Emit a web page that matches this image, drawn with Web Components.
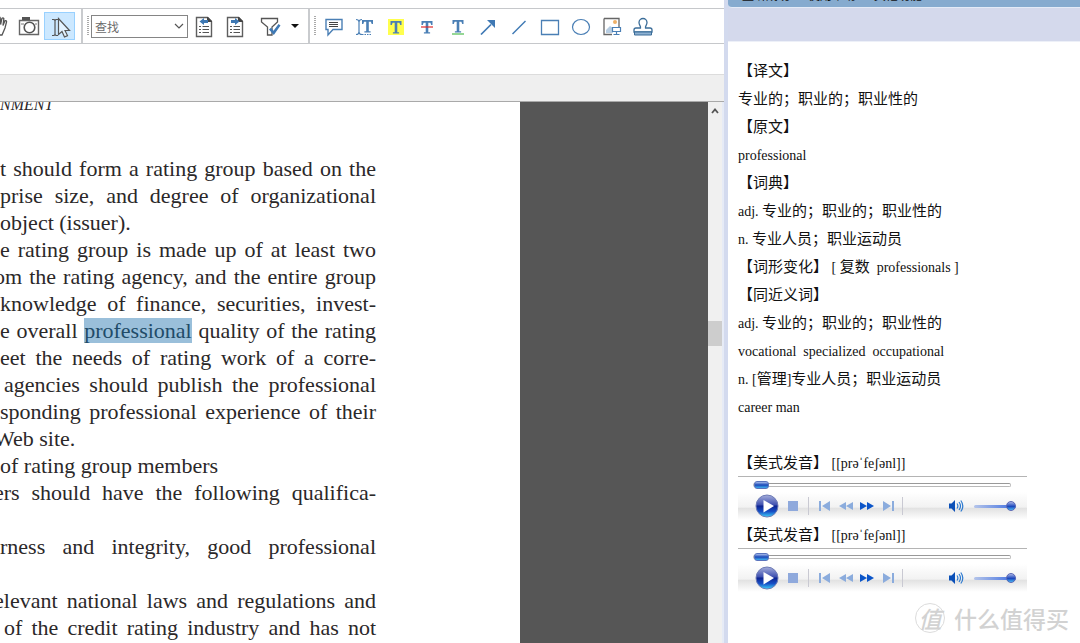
<!DOCTYPE html>
<html lang="zh-CN">
<head>
<meta charset="utf-8">
<title>PDF reader with dictionary</title>
<style>
html,body{margin:0;height:100%}
body{font-family:"Liberation Serif","Noto Sans CJK SC",serif;background:#fff;overflow:hidden}
</style>
</head>
<body>
<app-shell>
  <reader-toolbar slot="tools"></reader-toolbar>
  <pdf-view slot="doc">
    <text-line>t should form a rating group based on the</text-line>
    <text-line>prise size, and degree of organizational</text-line>
    <text-line kind="end">object (issuer).</text-line>
    <text-line>e rating group is made up of at least two</text-line>
    <text-line kind="cut">om the rating agency, and the entire group</text-line>
    <text-line>knowledge of finance, securities, invest-</text-line>
    <text-line>e overall <mark>professional</mark> quality of the rating</text-line>
    <text-line>eet the needs of rating work of a corre-</text-line>
    <text-line kind="gap">agencies should publish the professional</text-line>
    <text-line>sponding professional experience of their</text-line>
    <text-line kind="cut end">Web site.</text-line>
    <text-line kind="end">of rating group members</text-line>
    <text-line kind="cut">ers should have the following qualifica-</text-line>
    <text-line></text-line>
    <text-line>rness and integrity, good professional</text-line>
    <text-line></text-line>
    <text-line kind="cut">elevant national laws and regulations and</text-line>
    <text-line kind="gap">of the credit rating industry and has not</text-line>
  </pdf-view>
  <dict-panel slot="side">
    <gloss-line>【译文】</gloss-line>
    <gloss-line>专业的；职业的；职业性的</gloss-line>
    <gloss-line>【原文】</gloss-line>
    <gloss-line><span>professional</span></gloss-line>
    <gloss-line>【词典】</gloss-line>
    <gloss-line><span>adj. </span>专业的；职业的；职业性的</gloss-line>
    <gloss-line><span>n. </span>专业人员；职业运动员</gloss-line>
    <gloss-line>【词形变化】<span> [ </span>复数<span>  professionals ]</span></gloss-line>
    <gloss-line>【同近义词】</gloss-line>
    <gloss-line><span>adj. </span>专业的；职业的；职业性的</gloss-line>
    <gloss-line><span>vocational  specialized  occupational</span></gloss-line>
    <gloss-line><span>n. [</span>管理<span>]</span>专业人员；职业运动员</gloss-line>
    <gloss-line><span>career man</span></gloss-line>
    <gloss-line></gloss-line>
    <gloss-line>【美式发音】<span> [[prəˈfeʃənl]]</span></gloss-line>
    <audio-player label="美式发音"></audio-player>
    <gloss-line>【英式发音】<span> [[prəˈfeʃənl]]</span></gloss-line>
    <audio-player label="英式发音"></audio-player>
  </dict-panel>
  <water-mark slot="mark"></water-mark>
</app-shell>

<script>
function define(name, html) {
  customElements.define(name, class extends HTMLElement {
    constructor() {
      super();
      this.attachShadow({ mode: "open" }).innerHTML =
        typeof html === "function" ? html(this) : html;
    }
  });
}

define("app-shell", `
<style>
:host{display:grid;grid-template-columns:minmax(0,1fr) 4px 352px;height:100vh;position:relative;overflow:hidden}
.left{display:flex;flex-direction:column;min-height:0;min-width:0}
.rule{background:#d3daee}
.side{min-height:0;min-width:0;display:grid}
.mark{position:absolute;right:11px;bottom:8px}
</style>
<div class="left"><slot name="tools"></slot><slot name="doc"></slot></div>
<div class="rule"></div>
<div class="side"><slot name="side"></slot></div>
<div class="mark"><slot name="mark"></slot></div>`);

/* Toolbar glyphs, all drawn in a 22 x 22 box */
const T = (x, y) => `<path d="M${x} ${y}h11v4h-1.3l-.8-2.2h-2.1v9.4h1.8v1.3h-6.200v-1.300h1.800v-9.400h-2.100l-.8 2.200h-1.300z" fill="#4a7fb5"/>`;
const page = arrow => `<path d="M3.500 1.500h11l4 4v15h-15z" fill="#fff" stroke="#5e5e5e" stroke-width="1.400"/><path d="M14 1h1l4 4v1h-5z" fill="#444"/><path d="M6 10.500h2M6 13.500h2M6 16.500h2M9.500 10.500h6.500M9.500 13.500h6.500M9.500 16.500h6.500" stroke="#555"/><path d="${arrow}" fill="#3f79b4"/>`;
const icons = {
  hand: `<path d="M2 12l3 7h10l3-7 1.500-6c.4-1.500-1.500-1.800-1.900-.5l-1.600 4 .8-6.500c.1-1.500-1.800-1.600-2-.2l-1.200 5.700-.4-6.500c0-1.500-2-1.400-2 0v6.500L9 4c-.3-1.300-2-1-1.800.5L8 14z" fill="#fff" stroke="#555" stroke-width="1.300"/>`,
  camera: `<path d="M1.500 4.500h19v14h-19z" fill="#fff" stroke="#666" stroke-width="1.400"/><path d="M4 1h8v3H4z" fill="#555"/><path d="M3 8h3M17 8h2" stroke="#777"/><circle cx="11.500" cy="11.500" r="5.300" fill="#fff" stroke="#555" stroke-width="1.600"/>`,
  cursor: `<path d="M3 3.500h2l1 1 1-1h2M6 4.500v14M3 19.500h2l1-1 1 1h2" fill="none" stroke="#555" stroke-width="1.200"/><path d="M9.500 2.500v16l3.500-3 2.500 5.500 3-1.400-2.500-5.100h4.500z" fill="#e4f3ff" stroke="#555" stroke-width="1.200"/>`,
  prev: page("M11 2v2h4v3h-4v2L6.500 5.500z"),
  next: page("M11 2v2H7v3h4v2l4.500-3.500z"),
  filter: `<path d="M2.500 2.500h16v3.500l-5.500 5v8h-4.500v-8l-6-5z" fill="#fff" stroke="#555" stroke-width="1.300"/><path d="M10 13.500l2-1.800 2.500 3L19.500 8l2 1.500-6.700 9.500z" fill="#3f79b4"/>`,
  note: `<path d="M3 3.500h16v10h-9l-5 5.500v-5.500H3z" fill="#fff" stroke="#4a7fb5" stroke-width="1.400"/><path d="M6 6.500h9M6 8.500h9M6 10.500h9" stroke="#444"/>`,
  insert: `<path d="M2 3.500c2 0 3 1 3 2.500v10c0 1.500-1 2.500-3 2.500M8 3.500c-2 0-3 1-3 2.500M5 16c0 1.500 1 2.500 3 2.500" fill="none" stroke="#4a7fb5" stroke-width="1.200"/><path d="M8 18.500h9" stroke="#4a7fb5" stroke-dasharray="1.500 1"/>${T(8, 4)}`,
  mark: `<path d="M3 3h16v16H3z" fill="#ffff4d"/>${T(5.5, 5)}`,
  strike: `${T(5.5, 5)}<path d="M5 11h12" stroke="#e02a2a" stroke-width="1.200"/>`,
  under: `${T(5.5, 4)}<path d="M5 18h12" stroke="#5cc25c" stroke-width="1.300"/>`,
  arrow: `<path d="M4 18.500L14 8.500" stroke="#3f79b4" stroke-width="1.700"/><path d="M10 4h8v8z" fill="#3f79b4"/>`,
  line: `<path d="M4.500 18L17.500 5" stroke="#3f79b4" stroke-width="1.400"/>`,
  rect: `<path d="M2.500 4.500h17v14h-17z" fill="none" stroke="#4a7fb5" stroke-width="1.300"/>`,
  oval: `<ellipse cx="11" cy="11" rx="8.500" ry="7.500" fill="none" stroke="#4a7fb5" stroke-width="1.200"/>`,
  image: `<path d="M3 2.500h15V12M11 18.500H3V2.500" fill="none" stroke="#666" stroke-width="1.300"/><circle cx="14" cy="6" r="2" fill="#eeb067"/><path d="M5 17v-3l4-4 3 2v5z" fill="#b7cde2"/><path d="M11.500 11.500h8v4h-8zM15.500 16v2M12.500 18.500h6" fill="#fff" stroke="#4a7fb5" stroke-width="1.200"/>`,
  stamp: `<path d="M8.500 12c.5-2-1.500-3-1.500-5.500a4 4 0 0 1 8 0c0 2.500-2 3.500-1.500 5.500h4.500c1.500 0 2 1 2 2v2H2v-2c0-1 .5-2 2-2z" fill="#fff" stroke="#3b6d99" stroke-width="1.300"/><path d="M2.500 16h17v3h-17z" fill="#8fb2d2" stroke="#3b6d99"/>`
};
define("tool-icon", el => `
<style>
:host{display:flex;flex:1 1 0;height:28px;min-width:0}
button{flex:1;display:flex;align-items:center;justify-content:center;padding:2px 0 0;border:1px solid transparent;background:none}
:host([active]) button{background:#cce8ff;border-color:#99d1ff}
svg{flex:none;display:block}
</style>
<button type="button" aria-label="${el.getAttribute("name")}"><svg width="22" height="22" viewBox="0 0 22 22">${icons[el.getAttribute("name")]}</svg></button>`);

define("reader-toolbar", `
<style>
:host{display:block;flex:none;padding-top:8px}
.bar{display:flex;height:34px;border:solid #c6c8cb;border-width:1px 0}
.sec{display:flex;align-items:center;box-sizing:border-box;border-right:2px solid #c9cbce}
.one{width:83px}
.one .set{display:flex;width:93px;flex:none;margin-left:-18px}
.one{overflow:hidden}
.two{width:227px;padding-left:4px}
.three{flex:1;border:0;padding-left:4px}
.grip{width:2px;height:20px;background:repeating-linear-gradient(#aaa 0 1px,#fff 1px 2px);flex:none}
.find{display:flex;width:97px;height:23px;box-sizing:border-box;border:1px solid #858585;margin:0 0 0 2px;flex:none}
input{flex:1;min-width:0;border:0;outline:0;padding:0 3px;background:none;font:12px "Noto Sans CJK SC",sans-serif;color:#6b6b6b}
input::placeholder{color:#6b6b6b;opacity:1}
.find button{border:0;background:none;padding:0;width:17px;display:flex;align-items:center;justify-content:center}
.two .set{display:flex;width:62px}
.filter{display:flex;width:31px;margin-left:4px}
.more{border:0;background:none;padding:0;width:19px;display:flex;justify-content:center}
.three .set{display:flex;width:339px;margin-left:3px}
</style>
<div class="bar">
  <div class="sec one"><div class="set"><tool-icon name="hand"></tool-icon><tool-icon name="camera"></tool-icon><tool-icon name="cursor" active></tool-icon></div></div>
  <div class="sec two"><span class="grip"></span>
    <div class="find"><input type="text" placeholder="查找" aria-label="查找"><button type="button" aria-label="展开"><svg width="10" height="6" viewBox="0 0 10 6"><path d="M1 1l4 4 4-4" fill="none" stroke="#555" stroke-width="1.200"/></svg></button></div>
    <div class="set"><tool-icon name="prev"></tool-icon><tool-icon name="next"></tool-icon></div>
    <div class="filter"><tool-icon name="filter"></tool-icon></div>
    <button class="more" type="button" aria-label="更多"><svg width="8" height="4" viewBox="0 0 8 4"><path d="M0 0h8L4 4z" fill="#111"/></svg></button>
  </div>
  <div class="sec three"><span class="grip"></span><div class="set">
    ${["note","insert","mark","strike","under","arrow","line","rect","oval","image","stamp"].map(n => `<tool-icon name="${n}"></tool-icon>`).join("")}
  </div></div>
</div>`);

define("text-line", el => {
  const k = el.getAttribute("kind") || "";
  return `
<style>
:host{display:block;height:27px;font-size:22px;line-height:27px;white-space:nowrap;text-align:justify;text-align-last:${k.includes("end") ? "left" : "justify"};margin-left:${k.includes("cut") ? "-6px" : k.includes("gap") ? "4px" : "0"};color:#2b2829}
::slotted(mark){background:#9abfda;color:#214b68}
</style><slot></slot>`;
});

define("pdf-view", `
<style>
:host{display:flex;flex-direction:column;flex:1;min-height:0}
.tabs{height:26px;margin-top:30px;background:#efefef;border:solid #dcdcdc;border-width:1px 0;border-bottom-color:#a9a9a9;box-sizing:content-box;flex:none}
.view{display:flex;flex:1;min-height:0;background:#565656}
.page{flex:0 1 520px;background:#fff;overflow:hidden;box-sizing:border-box}
.head{font:italic 16px/18px "Liberation Serif",serif;color:#2b2829;height:18px;margin-top:-6px}
.col{width:376px;padding-top:41px}
.stage{flex:1}
.bar{width:14px;background:#f0f0f0;display:flex;flex-direction:column;align-items:center;border-right:2px solid #e6ebf6}
.bar button{border:0;background:none;padding:0;height:18px;width:14px;display:flex;align-items:center;justify-content:center}
.thumb{width:14px;height:25px;background:#cdcdcd;margin-top:201px}
</style>
<div class="tabs"></div>
<div class="view">
  <div class="page"><div class="head">NMENT</div><div class="col"><slot></slot></div></div>
  <div class="stage"></div>
  <div class="bar"><button type="button" aria-label="向上滚动"><svg width="8" height="6" viewBox="0 0 8 6"><path d="M1 5l3-3.500L7 5" fill="none" stroke="#555" stroke-width="1.800"/></svg></button><div class="thumb"></div></div>
</div>`);

define("dict-panel", `
<style>
:host{display:block;background:#fff;overflow:hidden}
header{height:42px;background:#d4d9ec;border-bottom:1px solid #edf0f8;box-sizing:border-box}
nav{display:flex;align-items:flex-end;gap:18px;height:8px;box-sizing:border-box;padding:0 0 5px 14px;overflow:hidden;background:#86abcf;border-bottom-left-radius:4px;border-bottom:1px solid #e4ebf7}
a{flex:none;font:12px/14px "Noto Sans CJK SC",sans-serif;color:#111;text-decoration:none}
.body{padding:14px 10px 0}
</style>
<header><nav><a href="#">监听成功</a><a href="#">使用帮助</a><a href="#">其他功能</a></nav></header>
<div class="body"><slot></slot></div>`);

define("gloss-line", `
<style>
:host{display:block;height:28px;font:15px/28px "Noto Sans CJK SC",sans-serif;color:#111}
div{white-space:pre}
::slotted(span){font-family:"Liberation Serif",serif;font-size:14px;line-height:20px}
</style><div><slot></slot></div>`);

define("audio-player", el => `
<style>
:host{display:block;width:289px;height:44px;box-sizing:border-box;border-top:1px solid #b4b4b4}
input{-webkit-appearance:none;appearance:none;display:block;margin:0;background:none}
.seek{width:258px;height:15px;margin-left:15px}
.seek::-webkit-slider-runnable-track{height:4px;box-sizing:border-box;border:1px solid #b9b9b9;border-top-color:#999;border-radius:2px;background:#fff}
.seek::-webkit-slider-thumb{-webkit-appearance:none;width:15px;height:8px;margin-top:-3px;border-radius:3px;border:1px solid #5a74bd;background:linear-gradient(#a9bdec,#1a48b8 50%,#42b0ee)}
.ctl{height:28px;display:grid;grid-template-columns:24px 28px 6px 22px 22px 20px 24px 4px 1fr 20px 8px 42px;padding:0 11px 0 17px;align-items:center;background:linear-gradient(#fff,#f2f2f2 54%,#e2e2e2 58%,#fff)}
button{border:0;padding:0;background:none;display:flex;align-items:center;justify-content:center}
svg{display:block;flex:none}
i{width:1px;height:18px;margin-left:1px;background:#c9c9d2}
.vol{grid-column:12;width:42px;height:12px}
.vol::-webkit-slider-runnable-track{height:3px;border-radius:2px;background:linear-gradient(90deg,#b5c5ea,#3c6ce0)}
.vol::-webkit-slider-thumb{-webkit-appearance:none;width:10px;height:10px;margin-top:-4px;border-radius:50%;border:1px solid #5a68b5;background:linear-gradient(#a9b4e6,#1a45bb 55%,#49b8f4)}
</style>
<input class="seek" type="range" value="0" aria-label="${el.getAttribute("label")} 进度">
<div class="ctl">
<button type="button" aria-label="播放"><svg width="24" height="24" viewBox="0 0 24 24"><defs><linearGradient id="g" x2="0" y2="1"><stop offset="0" stop-color="#a5aedb"/><stop offset=".45" stop-color="#3e50b0"/><stop offset=".5" stop-color="#0d2391"/><stop offset=".75" stop-color="#174fc5"/><stop offset="1" stop-color="#3ed1fa"/></linearGradient></defs><circle cx="12" cy="12" r="11" fill="url(#g)" stroke="#6e7bb5"/><path d="M8.500 6l10.500 6-10.500 6.500z" fill="#fff"/></svg></button>
<button type="button" aria-label="停止"><svg width="10" height="10"><path d="M0 0h10v10H0z" fill="#8fa9dc"/></svg></button><i></i>
<button type="button" aria-label="上一个"><svg width="12" height="10"><path d="M1 0h2v10H1zM12 0v10L4 5z" fill="#8bacdd"/></svg></button>
<button type="button" aria-label="快退"><svg width="14" height="8"><path d="M7 0v8L0 4zM14 0v8L7 4z" fill="#8bacdd"/></svg></button>
<button type="button" aria-label="快进"><svg width="14" height="8"><path d="M0 0v8l7-4zM7 0v8l7-4z" fill="#0b55c9"/></svg></button>
<button type="button" aria-label="下一个"><svg width="12" height="10"><path d="M9 0h2v10H9zM0 0v10l8-5z" fill="#8bacdd"/></svg></button><i></i><span></span>
<button type="button" aria-label="静音"><svg width="16" height="14" viewBox="0 0 16 14"><path d="M1 4.500h2.500L7 1v12L3.500 9.500H1z" fill="#0b50b8"/><path d="M9 4.500q1.800 2.500 0 5M11 3q3 4 0 8M12.800 1.500q4 5.500 0 11" fill="none" stroke="#2d7ad0" stroke-width="1.200"/></svg></button>
<input class="vol" type="range" value="100" aria-label="音量">
</div>`);

define("water-mark", `
<style>
:host{display:flex;align-items:center;gap:9px;color:#d2d2d2;font:500 23px/34px "Noto Sans CJK SC",sans-serif}
.seal{width:28px;height:28px;line-height:28px;border:1px solid #dcdcdc;border-radius:50%;display:flex;align-items:center;justify-content:center;font-style:italic}
</style>
<span class="seal">值</span><span>什么值得买</span>`);
</script>
</body>
</html>
